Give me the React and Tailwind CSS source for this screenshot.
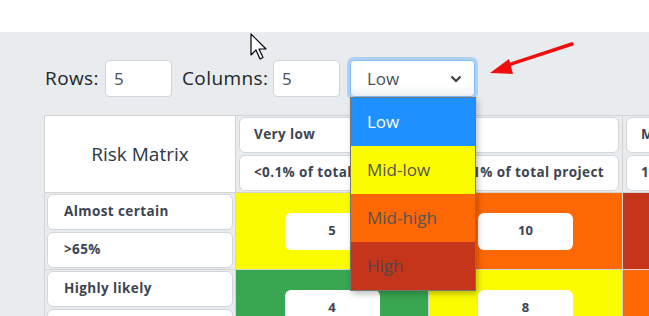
import React from 'react'

const FONT = { fontFamily: '"Open Sans", "Liberation Sans", sans-serif' }

const columns = [
  ['Very low', '<0.1% of total project'],
  ['Low', '0.1-1% of total project'],
  ['Moderate', '1-5% of total project'],
  ['High', '5-10% of total project'],
  ['Very high', '>10% of total project'],
]

const rows = [
  { name: 'Almost certain', range: '>65%', weight: 5, colors: ['bg-[#fcfc00]', 'bg-[#fd6704]', 'bg-[#c43519]', 'bg-[#c43519]', 'bg-[#c43519]'] },
  { name: 'Highly likely', range: '35-65%', weight: 4, colors: ['bg-[#39a651]', 'bg-[#fcfc00]', 'bg-[#fd6704]', 'bg-[#c43519]', 'bg-[#c43519]'] },
]

function Box({ children, pad = 'px-[14px]' }) {
  return (
    <div className={`h-[36px] flex items-center bg-white border border-[#d3d6da] rounded-[6px] ${pad}`}>
      <span className="block overflow-hidden whitespace-nowrap text-[13.5px] tracking-[0.4px] font-bold text-[#3d4451] leading-none">
        {children}
      </span>
    </div>
  )
}

function Cursor() {
  return (
    <svg className="absolute left-[250px] top-[33px]" width="20" height="30" viewBox="0 0 20 30">
      <path
        d="M1 1 L1 22 L6 17 L10 26 L13 24.5 L9 16 L16 16 Z"
        fill="#fff"
        stroke="#000"
        strokeWidth="1.2"
        strokeLinejoin="round"
      />
    </svg>
  )
}

function RedArrow() {
  return (
    <svg className="absolute left-[480px] top-[36px]" width="100" height="45" viewBox="480 36 100 45">
      <line x1="572" y1="44" x2="505" y2="66" stroke="#f20d0d" strokeWidth="3.5" strokeLinecap="round" />
      <polygon points="490,73 509,59 513,74" fill="#f20d0d" />
    </svg>
  )
}

export default function App() {
  return (
    <div className="relative w-[649px] h-[316px] overflow-hidden bg-[#e9ecef]" style={FONT}>
      <div className="h-8 bg-white" />

      <div className="flex items-center pl-[45px] pt-[28px] text-[19px] tracking-[0.4px] text-[#212529]">
        <span className="w-[55px]">Rows:</span>
        <div className="ml-[5px] w-[67px] h-[37px] bg-white border border-[#ced4da] rounded-[4px] flex items-center pl-[8px] text-[17px] text-[#495057]">
          5
        </div>
        <span className="ml-[10px] w-[86px]">Columns:</span>
        <div className="ml-[5px] w-[67px] h-[37px] bg-white border border-[#ced4da] rounded-[4px] flex items-center pl-[8px] text-[17px] text-[#495057]">
          5
        </div>
        <div className="ml-[10px] w-[125px] h-[37px] bg-gradient-to-b from-white from-70% to-[#eef0f2] border border-[#80bdff] rounded-[4px] shadow-[0_0_0_3px_rgba(0,123,255,0.25)] flex items-center justify-between pl-[16px] pr-[12px] text-[17px] tracking-normal text-[#495057]">
          <span>Low</span>
          <svg width="12" height="8" viewBox="0 0 12 8">
            <polyline points="1.5,1.5 6,6 10.5,1.5" fill="none" stroke="#343a40" strokeWidth="2" />
          </svg>
        </div>
      </div>

      <div className="mt-[18px] ml-[44px] w-max grid grid-cols-[191px_193px_194px_194px_194px_194px] border-l border-t border-[#d6d4d0]">
        <div className="h-[77px] border-r border-b border-[#d6d4d0] bg-white flex items-center justify-center text-[19px] text-[#2b3745]">
          Risk Matrix
        </div>
        {columns.map(([label, range]) => (
          <div key={label} className="h-[77px] border-r border-b border-[#d6d4d0] px-[3px] pt-[1px] flex flex-col gap-[2px]">
            <Box>{label}</Box>
            <Box>{range}</Box>
          </div>
        ))}

        {rows.map(row => (
          <React.Fragment key={row.name}>
            <div className="h-[77px] border-r border-b border-[#d6d4d0] px-[2px] pt-[1px] flex flex-col gap-[2px]">
              <Box pad="px-[16px]">{row.name}</Box>
              <Box pad="px-[16px]">{row.range}</Box>
            </div>
            {row.colors.map((color, i) => (
              <div key={i} className={`h-[77px] border-r border-b border-[#d6d4d0] flex items-center justify-center ${color}`}>
                <div className="w-[95px] h-[37px] bg-white rounded-[6px] flex items-center justify-center text-[13px] font-bold text-[#3d4451]">
                  {row.weight * (i + 1)}
                </div>
              </div>
            ))}
          </React.Fragment>
        ))}
      </div>

      <div className="absolute left-[350px] top-[97px] w-[126px] border border-[#767676] shadow-[2px_3px_6px_rgba(0,0,0,0.25)] text-[17px]">
        <div className="h-[48px] flex items-center pl-[16px] bg-[#1e90ff] text-white">Low</div>
        <div className="h-[48px] flex items-center pl-[16px] bg-[#fcfc00] text-[#555]">Mid-low</div>
        <div className="h-[48px] flex items-center pl-[16px] bg-[#fd6704] text-[#555]">Mid-high</div>
        <div className="h-[48px] flex items-center pl-[16px] bg-[#c43519] text-[#4a4a4a]">High</div>
      </div>

      <Cursor />
      <RedArrow />
    </div>
  )
}
